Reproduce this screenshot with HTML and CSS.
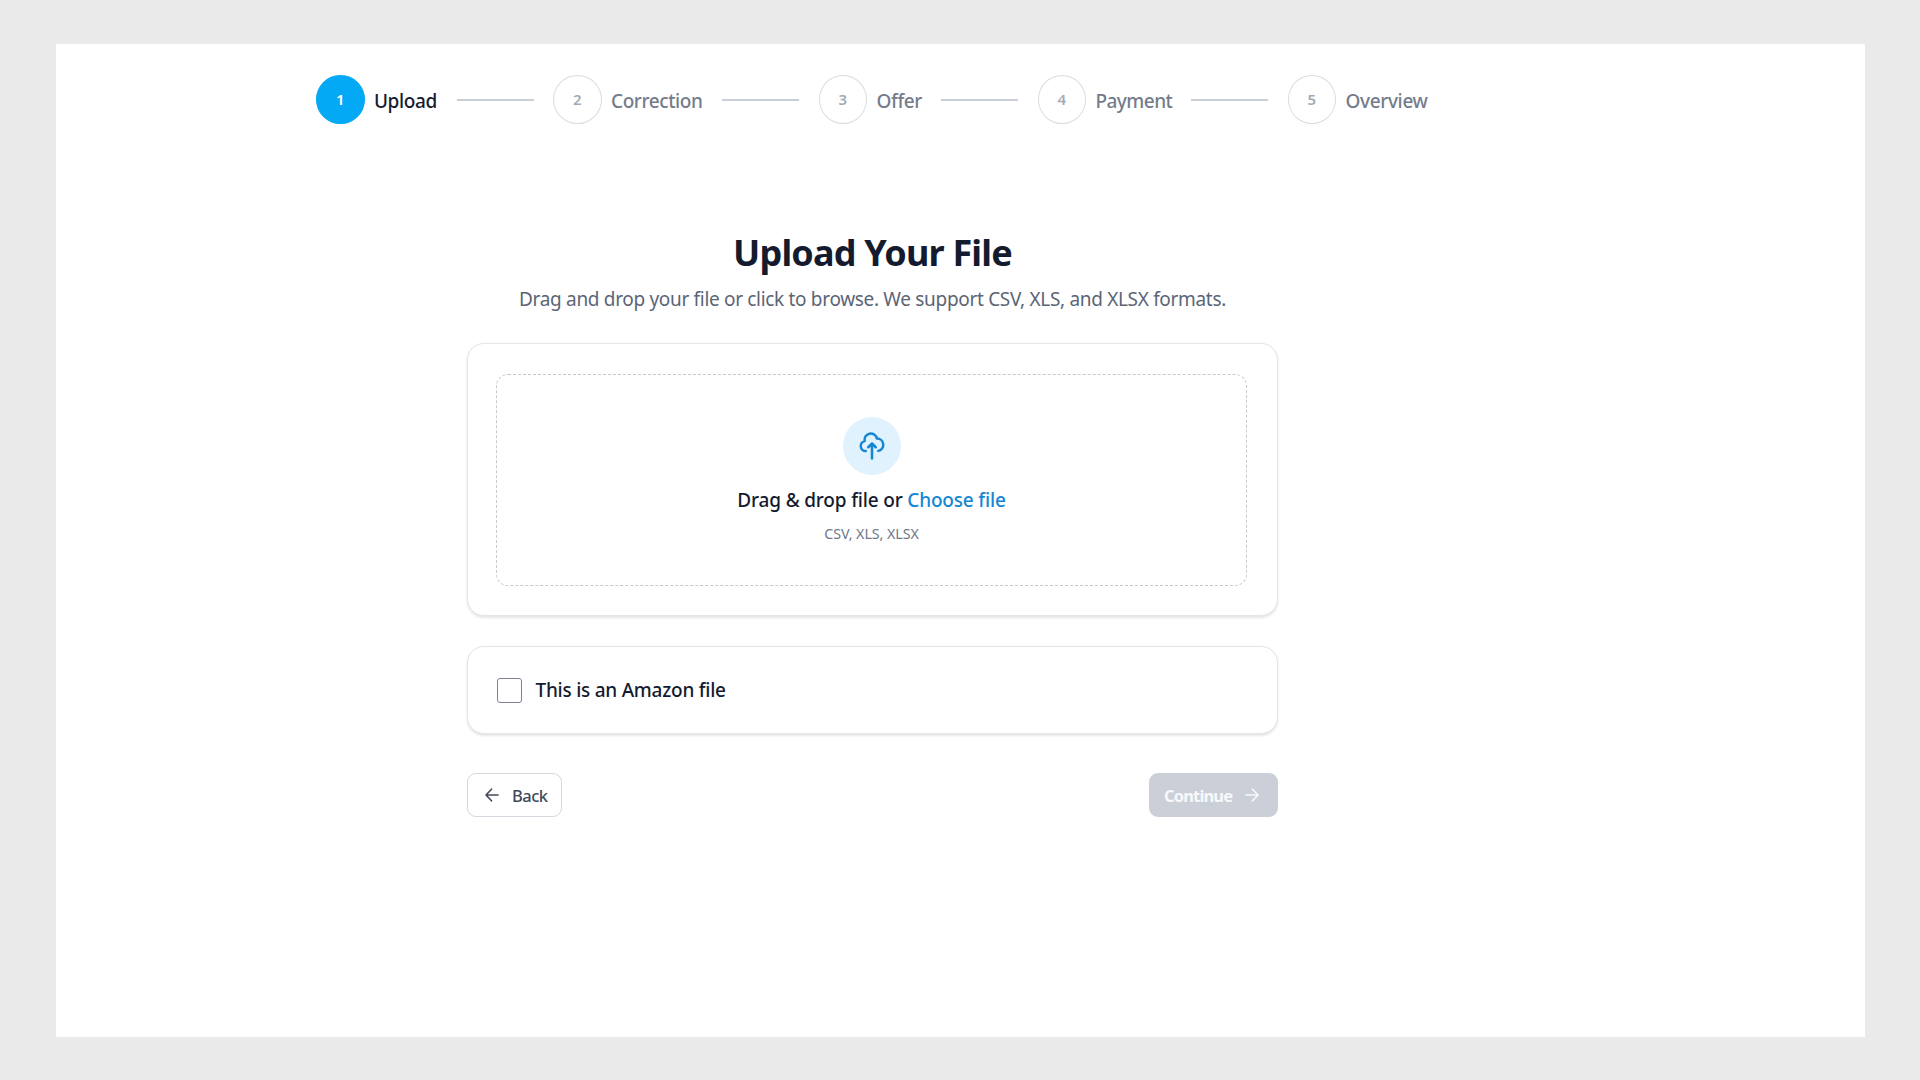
FILE: index.html
```
<!DOCTYPE html>
<html lang="en">
<head>
<meta charset="utf-8">
<title>Upload Your File</title>
<link rel="stylesheet" href="styles.css">
</head>
<body>
<main class="page">
  <ol class="stepper">
    <li class="step active"><span class="dot">1</span><span class="label upload">Upload</span></li>
    <li class="line"></li>
    <li class="step"><span class="dot">2</span><span class="label correction">Correction</span></li>
    <li class="line"></li>
    <li class="step"><span class="dot">3</span><span class="label offer">Offer</span></li>
    <li class="line"></li>
    <li class="step"><span class="dot">4</span><span class="label payment">Payment</span></li>
    <li class="line"></li>
    <li class="step"><span class="dot">5</span><span class="label overview">Overview</span></li>
  </ol>
  <section class="content">
    <h1 class="title">Upload Your File</h1>
    <p class="subtitle">Drag and drop your file or click to browse. We support CSV, XLS, and XLSX formats.</p>
    <div class="card upload-card">
      <div class="dropzone">
        <div class="cloud">
          <svg width="30" height="30" viewBox="0 0 24 24" fill="none" stroke="currentColor" stroke-width="2" stroke-linecap="round" stroke-linejoin="round"><path d="M7 16a4 4 0 0 1-.88-7.903A5 5 0 1 1 15.9 6H16a5 5 0 0 1 1 9.9"/><path d="M15 13l-3-3-3 3M12 10v12"/></svg>
        </div>
        <p class="prompt">Drag &amp; drop file or <a class="choose">Choose file</a></p>
        <p class="formats">CSV, XLS, XLSX</p>
      </div>
    </div>
    <label class="card option"><span class="checkbox"></span><span class="option-text">This is an Amazon file</span></label>
    <div class="actions">
      <button class="btn back"><svg class="arrow" viewBox="0 0 14 14"><path d="M13 7H1M6.5 1.2L1 7l5.5 5.8"/></svg><span>Back</span></button>
      <button class="btn continue"><span>Continue</span><svg class="arrow" viewBox="0 0 14 14"><path d="M1 7h12M7.5 1.2L13 7l-5.5 5.8"/></svg></button>
    </div>
  </section>
</main>
</body>
</html>
```
FILE: styles.css
```
* { box-sizing: border-box; margin: 0; padding: 0; }
body {
  height: 1080px;
  padding: 43.5px 55px 43px 55.5px;
  background: #eaeaea;
  font-family: "Noto Sans", "Open Sans", sans-serif;
  color: #151b2e;
  overflow: hidden;
}
.page { height: 993.5px; background: #fff; }
.stepper { display: flex; align-items: center; gap: 19.5px; padding: 31.5px 0 0 260.5px; list-style: none; }
.step { display: flex; align-items: center; gap: 9.5px; }
.dot {
  display: grid; place-items: center; width: 48.5px; height: 49px; padding-bottom: 1px;
  border: 1.5px solid #d9dce3; border-radius: 50%;
  font-size: 15px; font-weight: 600; color: #a4abb7;
}
.active .dot { background: #03a9f4; border-color: #03a9f4; color: #fff; }
.label { padding-top: 3px; font-size: 19px; line-height: 29px; font-weight: 500; color: #747c8b; white-space: nowrap; }
.active .label { color: #151b2e; }
.upload { width: 63px; letter-spacing: -.4px; }
.correction { width: 91.5px; letter-spacing: -.4px; }
.offer { width: 45px; letter-spacing: -.4px; }
.payment { width: 76px; letter-spacing: -.55px; }
.overview { letter-spacing: -.35px; }
.line { width: 77px; height: 2px; background: #c9ced7; }
.content { width: 811px; margin: 105px 0 0 411.5px; }
.title { padding-top: 2px; font-size: 36px; line-height: 44px; font-weight: 700; letter-spacing: -.8px; text-align: center; }
.subtitle { margin-top: 10px; font-size: 19px; line-height: 29px; letter-spacing: -.32px; text-align: center; color: #5b6576; white-space: nowrap; }
.card { border: 1px solid #e3e5e9; border-radius: 17px; background: #fff; box-shadow: 0 1.5px 2.5px rgba(0, 0, 0, .1); }
.upload-card { margin-top: 29px; height: 273px; padding: 30px 29px 30px 28px; }
.dropzone { width: 751px; height: 212px; border: 1px dashed #c6c9d0; border-radius: 12px; text-align: center; padding-top: 41.5px; }
.cloud { display: grid; place-items: center; width: 58px; height: 58px; margin: 0 auto; padding-top: 1px; border-radius: 50%; background: #dff2fe; color: #1586d4; }
.prompt { margin-top: 11.5px; font-size: 19px; line-height: 29px; font-weight: 500; letter-spacing: -.17px; }
.choose { color: #1586d4; }
.formats { margin-top: 9px; font-size: 14.3px; line-height: 19px; letter-spacing: -.08px; color: #6f7888; }
.option { display: flex; align-items: center; gap: 14px; height: 88px; margin-top: 30px; padding: 0 28.5px; font-size: 19px; font-weight: 500; letter-spacing: -.25px; }
.checkbox { width: 25px; height: 25px; border: 1.5px solid #7c8290; border-radius: 3px; }
.actions { display: flex; justify-content: space-between; margin-top: 39px; }
.btn { display: flex; align-items: center; height: 44px; border-radius: 9px; font: 500 16.5px "Noto Sans", sans-serif; letter-spacing: -.5px; }
.back { width: 95px; padding-left: 17px; gap: 13px; border: 1px solid #d4d8df; background: #fff; color: #414959; }
.continue { width: 129px; padding-left: 15px; gap: 13px; border: 0; background: #cbd0d8; color: #f8f9fa; font-weight: 700; letter-spacing: -.85px; }
.arrow { width: 14px; height: 14px; fill: none; stroke: currentColor; stroke-width: 1.6; stroke-linecap: round; stroke-linejoin: round; }
```
